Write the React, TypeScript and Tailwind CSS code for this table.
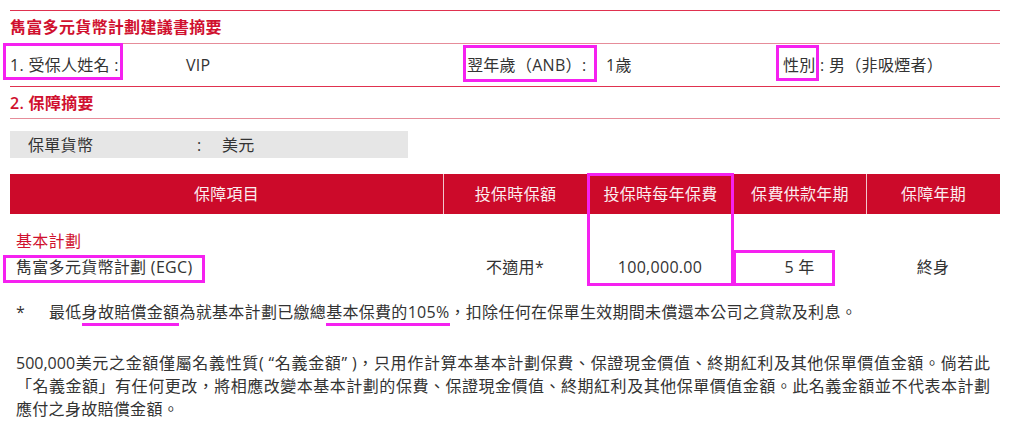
const font = { fontFamily: '"Open Sans", "Noto Sans CJK TC", sans-serif' };

const cols = 'grid grid-cols-[433px_144px_146px_133px_134px]';

function Mark({ className }: { className: string }) {
  return <div className={`absolute border-[3px] border-[#f521f0] pointer-events-none ${className}`} />;
}

export default function App() {
  return (
    <div
      lang="zh-TW"
      className="relative w-[1024px] h-[445px] bg-white text-[16px] tracking-[0.3px] text-[#333] overflow-hidden"
      style={font}
    >
      <div className="ml-[10px] w-[990px] pt-[10px]">
        <div className="border-t border-[#e0314f] h-[33px] flex items-center text-[#d0102e] font-semibold">
          雋富多元貨幣計劃建議書摘要
        </div>
        <div className="border-t border-[#e68c99] h-[43px] flex items-center">
          <span className="w-[176px]">1. 受保人姓名 :</span>
          <span className="w-[281px]">VIP</span>
          <span className="w-[139px]">翌年歲（ANB）:</span>
          <span className="w-[177px]">1歲</span>
          <span>性別 : 男（非吸煙者）</span>
        </div>
        <div className="border-t border-[#e0314f] h-[32px] flex items-center text-[#d0102e] font-semibold">
          2. 保障摘要
        </div>
        <div className="border-t border-[#e68c99]" />

        <div className="mt-[12px] w-[398px] h-[27px] bg-[#e6e6e6] flex items-center pl-[18px]">
          <span className="w-[169px]">保單貨幣</span>
          <span className="w-[25px]">:</span>
          <span>美元</span>
        </div>

        <div className={`${cols} mt-[16px] h-[40px] bg-[#cc0a2a] text-[#fbeef0]`}>
          <div className="flex items-center justify-center">保障項目</div>
          <div className="flex items-center justify-center border-l border-[#f1c6cd]">投保時保額</div>
          <div className="flex items-center justify-center border-l border-[#f1c6cd]">投保時每年保費</div>
          <div className="flex items-center justify-center border-l border-[#f1c6cd]">保費供款年期</div>
          <div className="flex items-center justify-center border-l border-[#f1c6cd]">保障年期</div>
        </div>

        <div className="pt-[15px] pl-[6px] leading-[24px] text-[#d0102e]">基本計劃</div>
        <div className={`${cols} h-[27px] items-center`}>
          <div className="pl-[6px]">雋富多元貨幣計劃 (EGC)</div>
          <div className="text-center">不適用*</div>
          <div className="text-center">100,000.00</div>
          <div className="text-center">5 年</div>
          <div className="text-center">終身</div>
        </div>

        <div className="mt-[20px] flex leading-[24px] pl-[6px]">
          <span className="w-[33px]">*</span>
          <span>
            最低<span className="border-b-[3px] border-[#f521f0]">身故賠償金額</span>為就基本計劃已繳總
            <span className="border-b-[3px] border-[#f521f0]">基本保費的105%</span>，扣除任何在保單生效期間未償還本公司之貸款及利息。
          </span>
        </div>

        <div className="mt-[28px] pl-[6px] w-[980px] leading-[23px] tracking-normal">
          <div className="text-justify [text-align-last:justify]">
            500,000美元之金額僅屬名義性質( “名義金額” )，只用作計算本基本計劃保費、保證現金價值、終期紅利及其他保單價值金額。倘若此
          </div>
          <div className="text-justify [text-align-last:justify]">
            「名義金額」有任何更改，將相應改變本基本計劃的保費、保證現金價值、終期紅利及其他保單價值金額。此名義金額並不代表本計劃
          </div>
          <div className="tracking-[0.3px]">應付之身故賠償金額。</div>
        </div>
      </div>

      <Mark className="left-[3px] top-[43px] w-[120px] h-[37px]" />
      <Mark className="left-[463px] top-[45px] w-[134px] h-[37px]" />
      <Mark className="left-[776px] top-[45px] w-[43px] h-[36px]" />
      <Mark className="left-[587px] top-[173px] w-[147px] h-[113px]" />
      <Mark className="left-[733px] top-[250px] w-[102px] h-[36px]" />
      <Mark className="left-[3px] top-[255px] w-[202px] h-[28px]" />
    </div>
  );
}
